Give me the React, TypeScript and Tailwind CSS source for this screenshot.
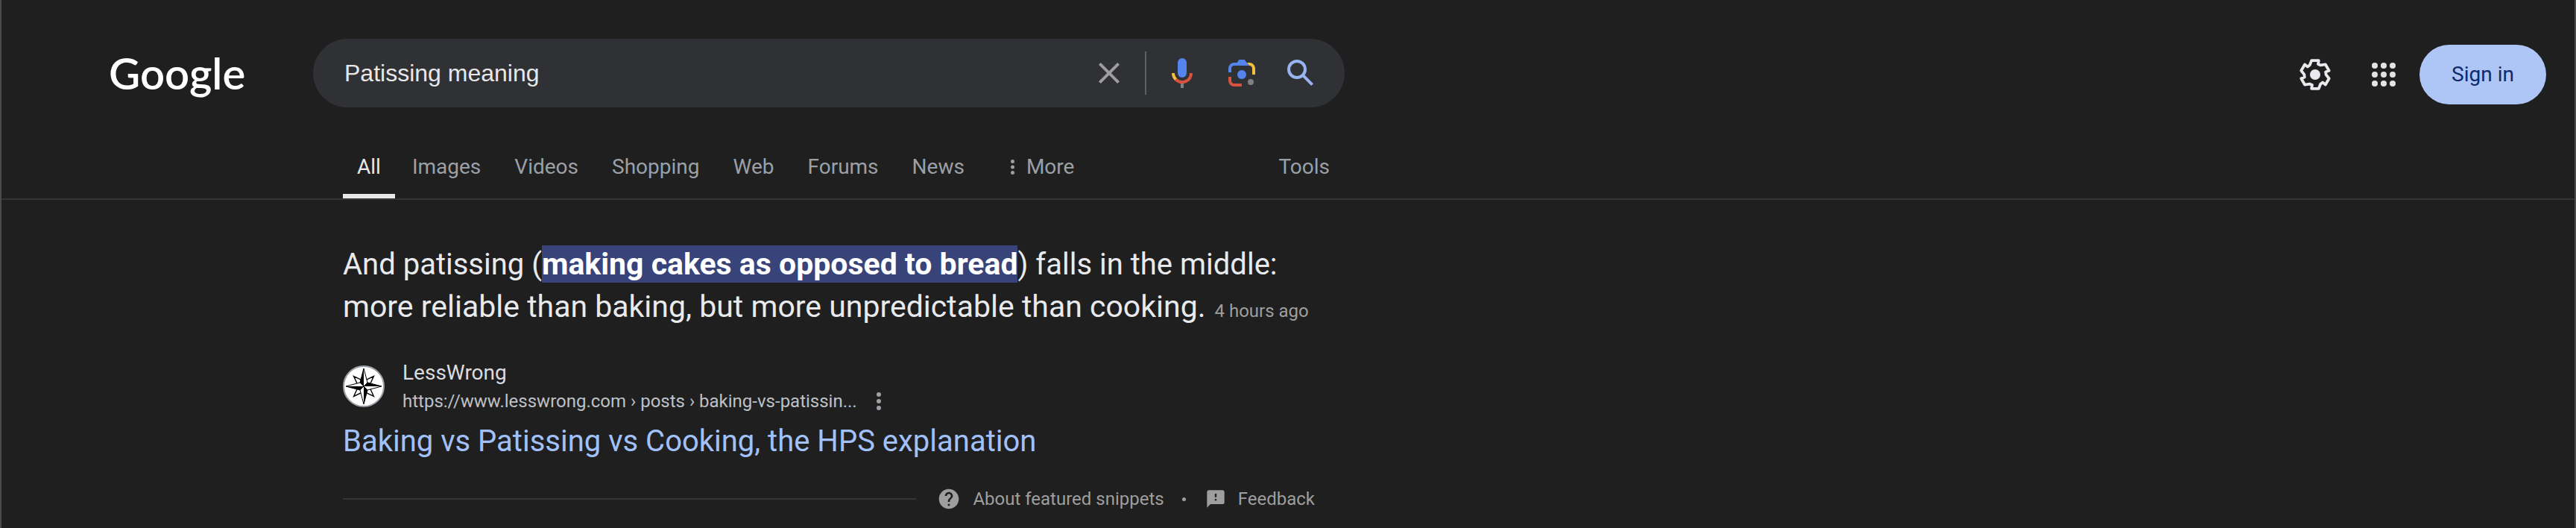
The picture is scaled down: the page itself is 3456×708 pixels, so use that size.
import { useState } from 'react';
import { MdFeedback, MdHelp } from 'react-icons/md';

const tabs = ['Images', 'Videos', 'Shopping', 'Web', 'Forums', 'News'];

// One arm of the settings gear, repeated every 60 degrees
const gearArm = [
  [-2.4, -9.4],
  [2.4, -9.4],
  [2, -7],
  [3.7, -6.3],
];

const gearPoints = [0, 60, 120, 180, 240, 300]
  .flatMap((deg) => {
    const a = (deg * Math.PI) / 180;
    return gearArm.map(
      ([x, y]) =>
        `${(12 + x * Math.cos(a) - y * Math.sin(a)).toFixed(2)},${(12 + x * Math.sin(a) + y * Math.cos(a)).toFixed(2)}`
    );
  })
  .join(' ');

function GearIcon() {
  return (
    <svg viewBox="0 0 24 24" className="size-12" aria-hidden="true">
      <polygon
        points={gearPoints}
        fill="none"
        stroke="#e8eaed"
        strokeWidth="1.9"
        strokeLinejoin="round"
      />
      <circle cx="12" cy="12" r="3.5" fill="#e8eaed" />
    </svg>
  );
}

function AppsIcon() {
  return (
    <svg viewBox="0 0 24 24" className="size-12" fill="#e3e3e3" aria-hidden="true">
      {[6, 12, 18].map((y) =>
        [6, 12, 18].map((x) => <circle key={`${x}-${y}`} cx={x} cy={y} r="2" />)
      )}
    </svg>
  );
}

function ClearIcon() {
  return (
    <svg viewBox="0 0 24 24" className="size-12" aria-hidden="true">
      <path d="M5.7 5.7l12.6 12.6M18.3 5.7L5.7 18.3" stroke="#9e9e9e" strokeWidth="2" />
    </svg>
  );
}

function MicIcon() {
  return (
    <svg viewBox="0 0 24 24" className="size-12" fill="none" aria-hidden="true">
      <rect x="9" y="2" width="6" height="13" rx="3" fill="#5484ed" />
      <path d="M6 12a6 6 0 0 0 2 4.47" stroke="#f4c042" strokeWidth="2" />
      <path d="M7.7 16.2A6 6 0 0 0 18 12" stroke="#d8523f" strokeWidth="2" />
      <path d="M11 19h2v3h-2z" fill="#7d807d" />
    </svg>
  );
}

function LensIcon() {
  return (
    <svg viewBox="0 0 24 24" className="size-12" aria-hidden="true">
      <path d="M15.5 5H17a4 4 0 0 1 4 4v4h-2V9a2 2 0 0 0-2-2z" fill="#f4c042" />
      <path
        d="M3 11.5V9a4 4 0 0 1 4-4h1.8l1.4-2h3.6l3 4H7a2 2 0 0 0-2 2v2.5z"
        fill="#5484ed"
      />
      <path d="M3 14.5V17a4 4 0 0 0 4 4h5v-2H7a2 2 0 0 1-2-2v-2.5z" fill="#d8523f" />
      <circle cx="12" cy="13" r="3" fill="#5484ed" />
      <circle cx="18" cy="18" r="2" fill="#7d807d" />
    </svg>
  );
}

function SearchIcon() {
  return (
    <svg viewBox="0 0 24 24" className="size-12" fill="none" stroke="#98b4f0" strokeWidth="2" aria-hidden="true">
      <circle cx="9" cy="9.5" r="5.5" />
      <path d="M13.1 13.6l6.2 6.2" />
    </svg>
  );
}

function Kebab({ className }: { className: string }) {
  return (
    <svg viewBox="0 0 6 24" className={className} fill="currentColor" aria-hidden="true">
      <circle cx="3" cy="3" r="3" />
      <circle cx="3" cy="12" r="3" />
      <circle cx="3" cy="21" r="3" />
    </svg>
  );
}

function CompassIcon() {
  return (
    <svg viewBox="-28 -28 56 56" className="size-14 shrink-0" aria-hidden="true">
      <circle r="27" fill="#fff" stroke="#9aa0a6" strokeWidth="2" />
      {[45, 135, 225, 315].map((deg) => (
        <g key={deg} transform={`rotate(${deg})`}>
          <path d="M0-19L4-8 0 0-4-8z" fill="#fff" stroke="#000" strokeWidth="1.4" />
        </g>
      ))}
      {[0, 90, 180, 270].map((deg) => (
        <g key={deg} transform={`rotate(${deg})`}>
          <path d="M0-24L5-5 0 0-5-5z" fill="#fff" stroke="#000" strokeWidth="1" />
          <path d="M0-24L-5-5 0 0z" fill="#000" />
        </g>
      ))}
    </svg>
  );
}

export default function App() {
  const [query, setQuery] = useState('Patissing meaning');

  return (
    <div className="min-h-screen border-x-2 border-[#4a4a4a] bg-[#1f1f1f] font-[Roboto,sans-serif] text-[#e8eaed]">
      <header className="border-b-2 border-[#353535] pt-[52px]">
        <div className="flex items-center">
          <div className="w-[418px] shrink-0 pl-36">
            <a href="#" className="font-[Lato,sans-serif] text-[58px] leading-[72px] font-semibold text-white">
              Google
            </a>
          </div>

          <form
            role="search"
            className="flex h-[92px] w-[1384px] items-center rounded-full bg-[#303135] pr-[34px] pl-[42px]"
            onSubmit={(e) => e.preventDefault()}
          >
            <input
              aria-label="Search"
              className="min-w-0 flex-1 bg-transparent font-['Liberation_Sans',sans-serif] text-[32px] leading-10 text-[#e8e8e8] outline-none"
              value={query}
              onChange={(e) => setQuery(e.target.value)}
            />
            <button type="button" aria-label="Clear" onClick={() => setQuery('')}>
              <ClearIcon />
            </button>
            <span className="mx-6 h-[58px] w-0.5 bg-[#5f6063]" />
            <div className="flex gap-8">
              <button type="button" aria-label="Search by voice">
                <MicIcon />
              </button>
              <button type="button" aria-label="Search by image">
                <LensIcon />
              </button>
              <button type="submit" aria-label="Search">
                <SearchIcon />
              </button>
            </div>
          </form>

          <div className="ml-auto flex items-center pt-1 pr-[38px]">
            <button type="button" aria-label="Settings">
              <GearIcon />
            </button>
            <button type="button" aria-label="Google apps" className="ml-11">
              <AppsIcon />
            </button>
            <a
              href="#"
              className="ml-6 flex h-20 w-[170px] items-center justify-center rounded-full bg-[#aec6f6] text-[28px] text-[#0f2a6b]"
            >
              Sign in
            </a>
          </div>
        </div>

        {/* Result type tabs */}
        <nav className="ml-[458px] flex w-[1344px] pt-[60px] text-[28px] leading-10 text-[#9aa0a6]">
          <a href="#" className="border-b-6 border-[#e8e8e8] px-[19px] pb-4 text-[#e8e8e8]">
            All
          </a>
          {tabs.map((tab) => (
            <a key={tab} href="#" className="ml-[23px] pr-[22px]">
              {tab}
            </a>
          ))}
          <button type="button" className="ml-10 flex h-10 items-center gap-4">
            <Kebab className="h-5 w-[5px]" />
            More
          </button>
          <button type="button" className="mr-5 ml-auto h-10">
            Tools
          </button>
        </nav>
      </header>

      <main className="ml-[458px] w-[1304px] pt-[58px]">
        <p className="text-[40px] leading-14 text-[#e8eaed]">
          And patissing (
          <b className="bg-[#38437a] py-px text-[41px] font-bold text-white">
            making cakes as opposed to bread
          </b>
          ) falls in the middle:{' '}
          <span className="text-[41px]">
            more reliable than baking, but more unpredictable than cooking.
          </span>
          <span className="ml-3 text-[24px] leading-none text-[#9e9e9e]">4 hours ago</span>
        </p>

        <article>
          <div className="mt-10 flex items-center">
            <CompassIcon />
            <div className="ml-6">
              <div className="text-[28px] leading-10 text-[#dadce0]">LessWrong</div>
              <div className="flex items-center text-[24px] leading-9 text-[#bdc1c6]">
                <cite className="not-italic">
                  https://www.lesswrong.com › posts › baking-vs-patissin...
                </cite>
                <button type="button" aria-label="About this result" className="ml-[26px] text-[#9aa0a6]">
                  <Kebab className="h-6 w-1.5" />
                </button>
              </div>
            </div>
          </div>
          <h3 className="mt-2.5 text-[40px] leading-[52px] text-[#a2c1fa]">
            <a href="#">Baking vs Patissing vs Cooking, the HPS explanation</a>
          </h3>
        </article>

        <div className="mt-[33px] flex items-center text-[24px] leading-9 text-[#9e9e9e]">
          <span className="h-0.5 flex-1 bg-[#353535]" />
          <a href="#" className="ml-7 flex items-center gap-4">
            <MdHelp className="size-8" />
            About featured snippets
          </a>
          <span className="mr-[26px] ml-6 size-[5px] rounded-full bg-[#9e9e9e]" />
          <a href="#" className="flex items-center gap-4">
            <MdFeedback className="size-7" />
            Feedback
          </a>
        </div>
      </main>
    </div>
  );
}
